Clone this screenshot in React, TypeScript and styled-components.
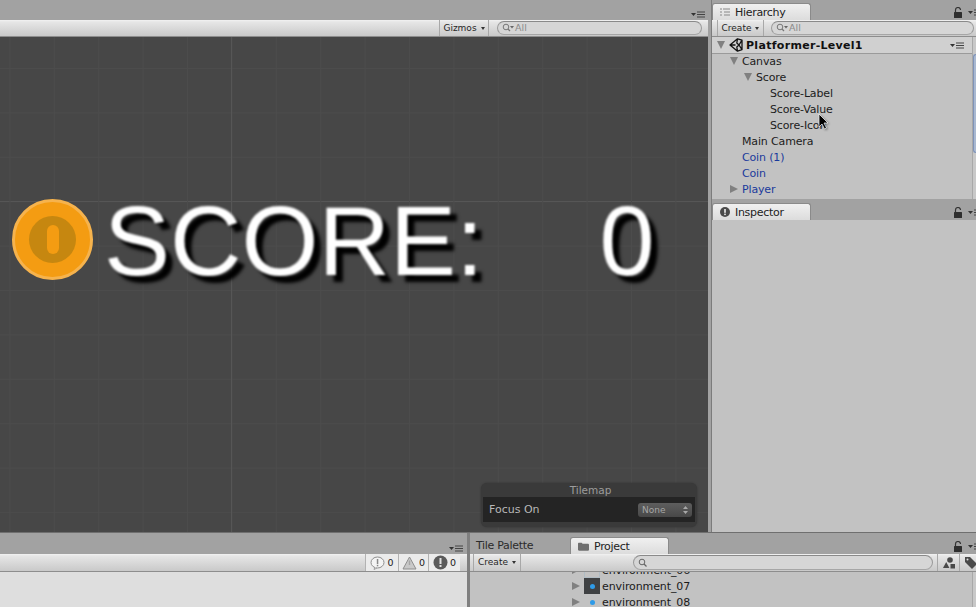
import React from "react";
import styled, { createGlobalStyle } from "styled-components";

const Global = createGlobalStyle`
  html, body { margin: 0; padding: 0; background: #a2a2a2; overflow: hidden; }
  * { box-sizing: border-box; }
`;

const Page = styled.div`
  position: relative;
  width: 976px;
  height: 607px;
  overflow: hidden;
  display: grid;
  grid-template-rows: 532px 75px;
  background: #a2a2a2;
  color: #1c1c1c;
  font-family: "DejaVu Sans", "Liberation Sans", sans-serif;
  font-size: 11px;
`;

const TopRow = styled.div`
  display: grid;
  grid-template-columns: 708px 265px;
  column-gap: 3px;
  min-height: 0;
`;

const BottomRow = styled.div`
  display: grid;
  grid-template-columns: 467px 509px;
  border-top: 1px solid #6f6f6f;
  min-height: 0;
`;

const Column = styled.div`
  display: flex;
  flex-direction: column;
  min-height: 0;
  min-width: 0;
`;

const RightColumn = styled(Column)`
  border-left: 1px solid #7c7c7c;
`;

const TabStrip = styled.div<{ $h: number }>`
  position: relative;
  flex: none;
  height: ${(p) => p.$h}px;
  display: flex;
  align-items: flex-end;
  background: #a2a2a2;
`;

const Tab = styled.div<{ $w: number; $ml?: number }>`
  width: ${(p) => p.$w}px;
  height: 17px;
  margin-left: ${(p) => p.$ml ?? 0}px;
  display: flex;
  align-items: center;
  gap: 5px;
  padding-left: 7px;
  border: 1px solid #8a8a8a;
  border-bottom: none;
  border-radius: 3px 3px 0 0;
  background: linear-gradient(#f0f0f0, #dcdcdc);
  letter-spacing: -0.3px;
  color: #222;
`;

const PlainTab = styled.div`
  margin-left: 6px;
  height: 17px;
  width: 94px;
  display: flex;
  align-items: center;
  letter-spacing: -0.3px;
  color: #2b2b2b;
`;

const PaneMenu = styled.div<{ $r: number; $gap?: number }>`
  position: absolute;
  right: ${(p) => p.$r}px;
  bottom: 2px;
  display: flex;
  align-items: center;
  gap: ${(p) => p.$gap ?? 6}px;
`;

const Toolbar = styled.div<{ $h?: number }>`
  flex: none;
  height: ${(p) => p.$h ?? 17}px;
  display: flex;
  align-items: stretch;
  background: linear-gradient(#f2f2f2 0, #e6e6e6 2px, #c9c9c9);
  border-bottom: 1px solid #8d8d8d;
  font-size: 9px;
  color: #262626;
`;

const ToolButton = styled.div<{ $w: number; $ml?: number }>`
  width: ${(p) => p.$w}px;
  margin-left: ${(p) => p.$ml ?? 0}px;
  flex: none;
  display: flex;
  align-items: center;
  justify-content: center;
  gap: 4px;
  padding-bottom: 1px;
  border-left: 1px solid #a8a8a8;
  border-right: 1px solid #a8a8a8;
`;

const Caret = styled.span`
  width: 0;
  height: 0;
  margin-top: 1px;
  border-left: 2.5px solid transparent;
  border-right: 2.5px solid transparent;
  border-top: 3px solid #333;
`;

const Search = styled.div<{ $w: number; $ml: number }>`
  width: ${(p) => p.$w}px;
  margin: 1px 0 1px ${(p) => p.$ml}px;
  flex: none;
  display: flex;
  align-items: center;
  gap: 0;
  padding: 0 0 1px 4px;
  border: 1px solid #9a9a9a;
  border-top-color: #8a8a8a;
  border-bottom-color: #a6a6a6;
  border-radius: 8px;
  background: #d6d6d6;
  color: #8a8a8a;
  font-size: 9.5px;
`;

const Scene = styled.div`
  flex: 1;
  min-height: 0;
  padding: 162px 0 0 12px;
  display: flex;
  align-items: flex-start;
  position: relative;
  overflow: hidden;
  background-color: #474747;
  background-image:
    linear-gradient(to right, #565656 1px, transparent 1px),
    linear-gradient(to right, #4c4c4c 1px, transparent 1px),
    linear-gradient(to bottom, #565656 1px, transparent 1px),
    linear-gradient(to bottom, #4c4c4c 1px, transparent 1px);
  background-size: 708px 100%, 44.4px 100%, 100% 495px, 100% 44.4px;
  background-position: 231px 0, 9.5px 0, 0 164px, 0 31px;
`;

const Coin = styled.div`
  flex: none;
  width: 81px;
  height: 81px;
  border-radius: 50%;
  background: #f49c12;
  border: 3px solid #f6b34d;
  display: flex;
  align-items: center;
  justify-content: center;
  filter: blur(0.7px);
`;

const CoinInner = styled.div`
  width: 47px;
  height: 47px;
  border-radius: 50%;
  background: #c68710;
  display: flex;
  align-items: center;
  justify-content: center;
`;

const CoinSlot = styled.div`
  width: 12px;
  height: 29px;
  border-radius: 6px;
  background: #f49c12;
`;

const ScoreText = styled.div<{ $ml: number }>`
  margin-left: ${(p) => p.$ml}px;
  font-family: "Liberation Sans", Arial, sans-serif;
  font-size: 99px;
  line-height: 84px;
  color: #fff;
  white-space: nowrap;
  text-shadow: 7px 7px 3px #000;
  filter: blur(1.2px);
`;

const Overlay = styled.div`
  position: absolute;
  left: 481px;
  top: 446px;
  width: 216px;
  height: 44px;
  border-radius: 6px;
  background: #3a3a3a;
  box-shadow: 0 0 2px #303030;
  color: #b4b4b4;
  display: flex;
  flex-direction: column;
`;

const OverlayTitle = styled.div`
  height: 14px;
  padding-left: 3px;
  text-align: center;
  line-height: 15px;
  font-size: 10.5px;
  color: #9c9c9c;
`;

const OverlayBody = styled.div`
  margin: 0 2px;
  height: 25px;
  display: flex;
  align-items: center;
  justify-content: space-between;
  padding: 0 3px 0 6px;
  background: #242424;
  font-size: 11px;
  color: #b8b8b8;
`;

const OverlaySelect = styled.div`
  width: 54px;
  height: 14px;
  border-radius: 3px;
  background: linear-gradient(#5e5e5e, #484848);
  display: flex;
  align-items: center;
  justify-content: space-between;
  padding: 0 4px;
  font-size: 9px;
  color: #a6a6a6;
`;

const ListPanel = styled.div`
  position: relative;
  flex: 1;
  min-height: 0;
  background: #c2c2c2;
  overflow: hidden;
`;

const HierarchyPanel = styled(Column)`
  height: 199px;
  flex: none;
`;

const SceneHeader = styled.div`
  height: 17px;
  margin-bottom: -1px;
  display: flex;
  align-items: center;
  padding: 0 8px 0 5px;
  margin-right: 4px;
  border-bottom: 1px solid #9a9a9a;
  background: #d0d0d0;
  font-weight: bold;
  font-size: 11px;
  letter-spacing: 0.3px;
  color: #111;
`;

const HeaderName = styled.span`
  margin-left: 3px;
  flex: 1;
`;

const Row = styled.div<{ $depth: number }>`
  position: relative;
  height: 16px;
  display: flex;
  align-items: center;
  padding-left: ${(p) => 18 + p.$depth * 14}px;
  letter-spacing: -0.15px;
`;

const Arrow = styled.span<{ $dir?: "down" | "right" | "none" }>`
  width: 12px;
  flex: none;
  display: inline-block;
  height: 0;
  ${(p) =>
    p.$dir === "down"
      ? "width:0;margin-right:4px;border-left:4.5px solid transparent;border-right:4.5px solid transparent;border-top:8px solid #808080;"
      : p.$dir === "right"
        ? "width:0;margin-right:4px;border-top:4.5px solid transparent;border-bottom:4.5px solid transparent;border-left:8px solid #808080;"
        : ""}
`;

const RowName = styled.span<{ $blue?: boolean }>`
  color: ${(p) => (p.$blue ? "#1a3a9c" : "#1c1c1c")};
  white-space: nowrap;
`;

const ScrollRail = styled.div`
  position: absolute;
  top: 0;
  right: 0;
  bottom: 0;
  width: 4px;
  border-left: 1px solid #a8a8a8;
  background: #c8c8c8;
`;

const ScrollThumb = styled.div`
  height: 99px;
  margin-top: 17px;
  border-radius: 4px 0 0 4px;
  border: 1px solid #7f93b8;
  border-right: none;
  background: #a9b8d0;
`;

const Cursor = styled.svg`
  position: absolute;
  left: 818px;
  top: 113px;
  filter: drop-shadow(1px 1px 1px rgba(0, 0, 0, 0.4));
`;

const ConsoleBody = styled.div`
  flex: 1;
  background: #dedede;
`;

const ConsoleToolbar = styled(Toolbar)`
  justify-content: flex-end;
  padding-right: 7px;
  font-size: 9.5px;
`;

const CountButton = styled.div<{ $w: number }>`
  width: ${(p) => p.$w}px;
  flex: none;
  display: flex;
  align-items: center;
  justify-content: center;
  gap: 2px;
  background: #ebebeb;
  border-left: 1px solid #b2b2b2;
  color: #222;
`;

const ProjectColumn = styled(Column)`
  border-left: 3px solid #7f7f7f;
`;

const ProjectList = styled(ListPanel)`
  padding-left: 102px;
`;

const ProjectRows = styled.div`
  margin-top: -10px;
`;

const ProjectRow = styled.div`
  height: 16px;
  display: flex;
  align-items: center;
  letter-spacing: -0.1px;
  color: #1a1a1a;
  white-space: nowrap;
`;

const Thumb = styled.div<{ $kind: "light" | "dark" | "plain" }>`
  width: 16px;
  height: 16px;
  margin-right: 2px;
  flex: none;
  display: flex;
  align-items: center;
  justify-content: center;
  background: ${(p) => (p.$kind === "dark" ? "#3f4143" : "transparent")};
  border: ${(p) => (p.$kind === "light" ? "1px solid #b0bcc4" : "none")};
`;

const Dot = styled.span`
  width: 5px;
  height: 5px;
  border-radius: 50%;
  background: #2f9be8;
`;

const RightIcons = styled.div`
  margin-left: auto;
  margin-right: -5px;
  display: flex;
  align-items: stretch;
`;

const IconButton = styled.div`
  width: 22px;
  flex: none;
  display: flex;
  align-items: center;
  justify-content: center;
  border-left: 1px solid #a8a8a8;
`;

const MenuIcon = () => (
  <svg width="14" height="7" viewBox="0 0 14 7">
    <path d="M0 2h5L2.5 5z" fill="#333" />
    <path d="M6 1h8M6 3.5h8M6 6h8" stroke="#444" strokeWidth="1" />
  </svg>
);

const LockIcon = () => (
  <svg width="8" height="11" viewBox="0 0 8 11">
    <path d="M1.5 5V3a2.5 2.5 0 0 1 5 0" fill="none" stroke="#333" strokeWidth="1.2" />
    <rect x="0" y="5" width="8" height="6" rx="0.5" fill="#2e2e2e" />
  </svg>
);

const SearchGlyph = () => (
  <svg width="13" height="9" viewBox="0 0 13 9">
    <circle cx="4" cy="4" r="2.8" fill="none" stroke="#777" strokeWidth="1" />
    <path d="M6 6l2 2" stroke="#777" strokeWidth="1.2" />
    <path d="M8 3h4L10 5.5z" fill="#666" />
  </svg>
);

const UnityLogo = () => (
  <svg width="14" height="14" viewBox="0 0 14 14">
    <path
      d="M8.5 0.8 13 2.2 13 11.6 8.5 13.2 1 7z M8.5 0.8 7.8 5 10 7 7.8 9 8.5 13.2 M1 7h5.5 M10 7l3-4.8 M10 7l3 4.6"
      fill="none"
      stroke="#111"
      strokeWidth="1.3"
      strokeLinejoin="round"
    />
  </svg>
);

const ListGlyph = () => (
  <svg width="10" height="9" viewBox="0 0 10 9">
    <path d="M0 1h2M0 4h2M0 7h2" stroke="#888" strokeWidth="1" />
    <path d="M3 1h7M4 4h6M4 7h6" stroke="#888" strokeWidth="1" />
  </svg>
);

const InfoCircle = () => (
  <svg width="10" height="10" viewBox="0 0 10 10">
    <circle cx="5" cy="5" r="5" fill="#4a4a4a" />
    <rect x="4.2" y="2" width="1.6" height="3.8" fill="#eee" />
    <rect x="4.2" y="6.6" width="1.6" height="1.5" fill="#eee" />
  </svg>
);

const FolderGlyph = () => (
  <svg width="11" height="9" viewBox="0 0 12 9">
    <path d="M0 1.5C0 .8.5.5 1 .5h3l1 1h6c.6 0 1 .4 1 1V8c0 .5-.4 1-1 1H1C.5 9 0 8.500 0 8z" fill="#6f6f6f" />
  </svg>
);

const MiniSearch = () => (
  <svg width="10" height="9" viewBox="0 0 10 9">
    <circle cx="4" cy="4" r="2.8" fill="none" stroke="#666" strokeWidth="1" />
    <path d="M6 6l2.500 2.500" stroke="#666" strokeWidth="1.2" />
  </svg>
);

const ConsoleInfo = () => (
  <svg width="15" height="14" viewBox="0 0 15 14">
    <ellipse cx="7.5" cy="6.500" rx="6.500" ry="5.500" fill="#f4f4f4" stroke="#8f8f8f" strokeWidth="1" />
    <path d="M5 11l-1 2.500 3-1.500" fill="#f4f4f4" stroke="#8f8f8f" strokeWidth="0.8" />
    <rect x="6.800" y="3" width="1.500" height="5" fill="#888" />
    <rect x="6.800" y="8.800" width="1.500" height="1.500" fill="#888" />
  </svg>
);

const ConsoleWarn = () => (
  <svg width="15" height="14" viewBox="0 0 15 14">
    <path d="M7.500 1 14 13H1z" fill="#c9c9c9" stroke="#8f8f8f" strokeWidth="1" />
    <rect x="6.800" y="4.500" width="1.400" height="4.500" fill="#a6a6a6" />
  </svg>
);

const ConsoleError = () => (
  <svg width="15" height="15" viewBox="0 0 15 15">
    <circle cx="7.500" cy="7.500" r="7" fill="#5a5a5a" />
    <rect x="6.500" y="3" width="2" height="6" fill="#e0e0e0" />
    <rect x="6.500" y="10" width="2" height="2" fill="#e0e0e0" />
  </svg>
);

const ShapesGlyph = () => (
  <svg width="12" height="12" viewBox="0 0 12 12">
    <circle cx="7" cy="3" r="2.800" fill="#4a4a4a" />
    <path d="M3.200 5 6.400 11H0z" fill="#4a4a4a" />
    <rect x="7.500" y="7" width="4.500" height="4.500" fill="#4a4a4a" />
  </svg>
);

const TagGlyph = () => (
  <svg width="13" height="13" viewBox="0 0 13 13">
    <path d="M1 1h5l7 7-5 5-7-7z" fill="#4a4a4a" />
    <circle cx="3.500" cy="3.500" r="1" fill="#ddd" />
  </svg>
);

const SelectArrows = () => (
  <svg width="5" height="8" viewBox="0 0 5 8">
    <path d="M2.500 0 5 3H0zM2.500 8 5 5H0z" fill="#a8a8a8" />
  </svg>
);

const tree: { name: string; depth: number; arrow?: "down" | "right"; blue?: boolean }[] = [
  { name: "Canvas", depth: 0, arrow: "down" },
  { name: "Score", depth: 1, arrow: "down" },
  { name: "Score-Label", depth: 2 },
  { name: "Score-Value", depth: 2 },
  { name: "Score-Icon", depth: 2 },
  { name: "Main Camera", depth: 0 },
  { name: "Coin (1)", depth: 0, blue: true },
  { name: "Coin", depth: 0, blue: true },
  { name: "Player", depth: 0, arrow: "right", blue: true },
];

const assets: { name: string; kind: "light" | "dark" | "plain" }[] = [
  { name: "environment_06", kind: "light" },
  { name: "environment_07", kind: "dark" },
  { name: "environment_08", kind: "plain" },
];

export default function App() {
  return (
    <Page>
      <Global />
      <TopRow>
        <Column>
          <TabStrip $h={20}>
            <PaneMenu $r={3}>
              <MenuIcon />
            </PaneMenu>
          </TabStrip>
          <Toolbar>
            <ToolButton $w={50} $ml={439}>
              Gizmos <Caret />
            </ToolButton>
            <Search $w={205} $ml={8}>
              <SearchGlyph />
              All
            </Search>
          </Toolbar>
          <Scene>
            <Coin>
              <CoinInner>
                <CoinSlot />
              </CoinInner>
            </Coin>
            <ScoreText $ml={11}>SCORE:</ScoreText>
            <ScoreText $ml={116}>0</ScoreText>
            <Overlay>
              <OverlayTitle>Tilemap</OverlayTitle>
              <OverlayBody>
                Focus On
                <OverlaySelect>
                  None
                  <SelectArrows />
                </OverlaySelect>
              </OverlayBody>
            </Overlay>
          </Scene>
        </Column>
        <RightColumn>
          <HierarchyPanel>
            <TabStrip $h={20}>
              <Tab $w={99}>
                <ListGlyph />
                Hierarchy
              </Tab>
              <PaneMenu $r={-6}>
                <LockIcon />
                <MenuIcon />
              </PaneMenu>
            </TabStrip>
            <Toolbar>
              <ToolButton $w={47} $ml={5}>
                Create <Caret />
              </ToolButton>
              <Search $w={203} $ml={7}>
                <SearchGlyph />
                All
              </Search>
            </Toolbar>
            <ListPanel>
              <SceneHeader>
                <Arrow $dir="down" />
                <UnityLogo />
                <HeaderName>Platformer-Level1</HeaderName>
                <MenuIcon />
              </SceneHeader>
              {tree.map((item) => (
                <Row key={item.name} $depth={item.depth}>
                  <Arrow $dir={item.arrow ?? "none"} />
                  <RowName $blue={item.blue}>{item.name}</RowName>
                </Row>
              ))}
              <ScrollRail>
                <ScrollThumb />
              </ScrollRail>
            </ListPanel>
          </HierarchyPanel>
          <TabStrip $h={21}>
            <Tab $w={99}>
              <InfoCircle />
              Inspector
            </Tab>
            <PaneMenu $r={-6}>
              <LockIcon />
              <MenuIcon />
            </PaneMenu>
          </TabStrip>
          <ListPanel />
        </RightColumn>
      </TopRow>
      <BottomRow>
        <Column>
          <TabStrip $h={21}>
            <PaneMenu $r={4}>
              <MenuIcon />
            </PaneMenu>
          </TabStrip>
          <ConsoleToolbar $h={18}>
            <CountButton $w={33}>
              <ConsoleInfo />0
            </CountButton>
            <CountButton $w={30}>
              <ConsoleWarn />0
            </CountButton>
            <CountButton $w={32}>
              <ConsoleError />0
            </CountButton>
          </ConsoleToolbar>
          <ConsoleBody />
        </Column>
        <ProjectColumn>
          <TabStrip $h={21}>
            <PlainTab>Tile Palette</PlainTab>
            <Tab $w={99}>
              <FolderGlyph />
              Project
            </Tab>
            <PaneMenu $r={-6}>
              <LockIcon />
              <MenuIcon />
            </PaneMenu>
          </TabStrip>
          <Toolbar $h={18}>
            <ToolButton $w={48} $ml={3}>
              Create <Caret />
            </ToolButton>
            <Search $w={300} $ml={112}>
              <MiniSearch />
            </Search>
            <RightIcons>
              <IconButton>
                <ShapesGlyph />
              </IconButton>
              <IconButton>
                <TagGlyph />
              </IconButton>
            </RightIcons>
          </Toolbar>
          <ProjectList>
            <ProjectRows>
              {assets.map((a) => (
                <ProjectRow key={a.name}>
                  <Arrow $dir="right" />
                  <Thumb $kind={a.kind}>{a.kind !== "light" && <Dot />}</Thumb>
                  {a.name}
                </ProjectRow>
              ))}
            </ProjectRows>
            <ScrollRail />
          </ProjectList>
        </ProjectColumn>
      </BottomRow>
      <Cursor width="12" height="18" viewBox="0 0 12 18">
        <path d="M1 1v13l3-3 2.500 5 2-1-2.500-5h4z" fill="#000" stroke="#fff" strokeWidth="0.7" />
      </Cursor>
    </Page>
  );
}
